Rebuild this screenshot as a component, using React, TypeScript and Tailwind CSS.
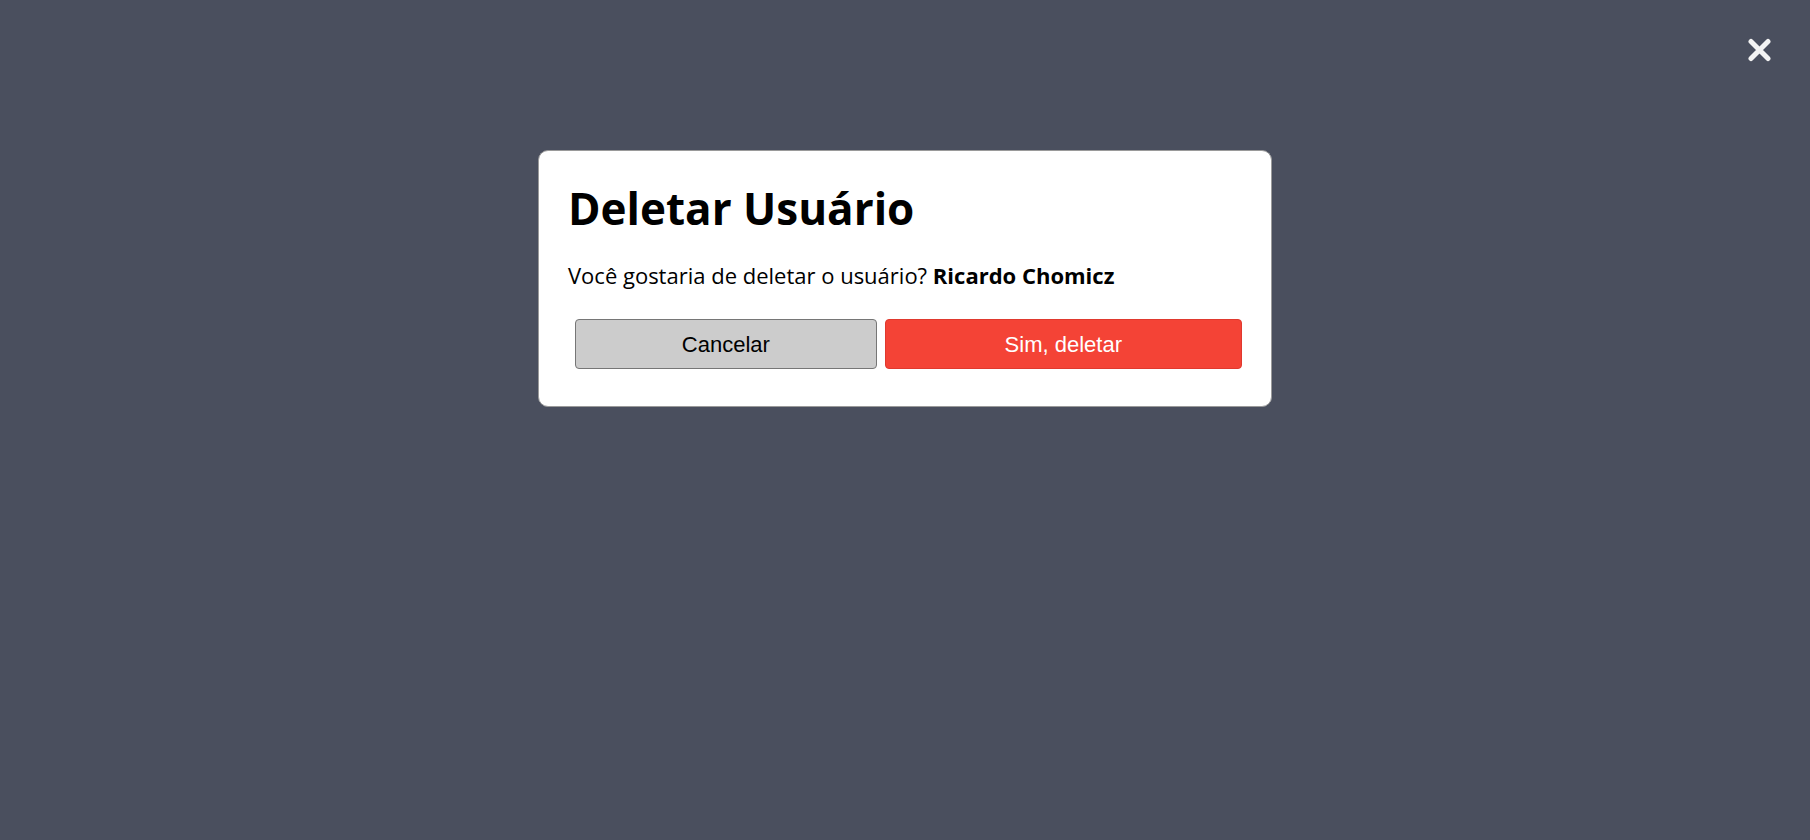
export default function App() {
  return (
    <div className="relative h-[840px] w-full bg-[#4a4f5e] font-['Open_Sans',sans-serif]">
      <button className="absolute right-[38px] top-[38px] flex h-[24px] w-[25px] items-center justify-center text-[#f3f3f3]">
        <svg viewBox="0 0 25 24" className="h-[24px] w-[25px]">
          <path d="M4 3.5 L21 20.5 M21 3.5 L4 20.5" stroke="currentColor" strokeWidth="5" strokeLinecap="round" />
        </svg>
      </button>
      <div className="flex justify-center pt-[150px]">
        <div className="w-[734px] rounded-[10px] border border-[#9a9a9a] bg-white px-[29px] pt-[27px] pb-[37px]">
          <h2 className="text-[44px] font-bold leading-[60px] text-black">Deletar Usuário</h2>
          <p className="mt-[22px] text-[22px] leading-[30px] text-black">
            Você gostaria de deletar o usuário? <strong className="font-bold">Ricardo Chomicz</strong>
          </p>
          <div className="mt-[29px] flex gap-[8px] pl-[7px]">
            <button className="h-[50px] w-[303px] rounded-[4px] border border-[#767676] bg-[#cccccc] font-['Liberation_Sans',sans-serif] text-[22px] text-black">
              Cancelar
            </button>
            <button className="h-[50px] w-[359px] rounded-[4px] border border-[#e0392e] bg-[#f44336] font-['Liberation_Sans',sans-serif] text-[22px] text-white">
              Sim, deletar
            </button>
          </div>
        </div>
      </div>
    </div>
  );
}
